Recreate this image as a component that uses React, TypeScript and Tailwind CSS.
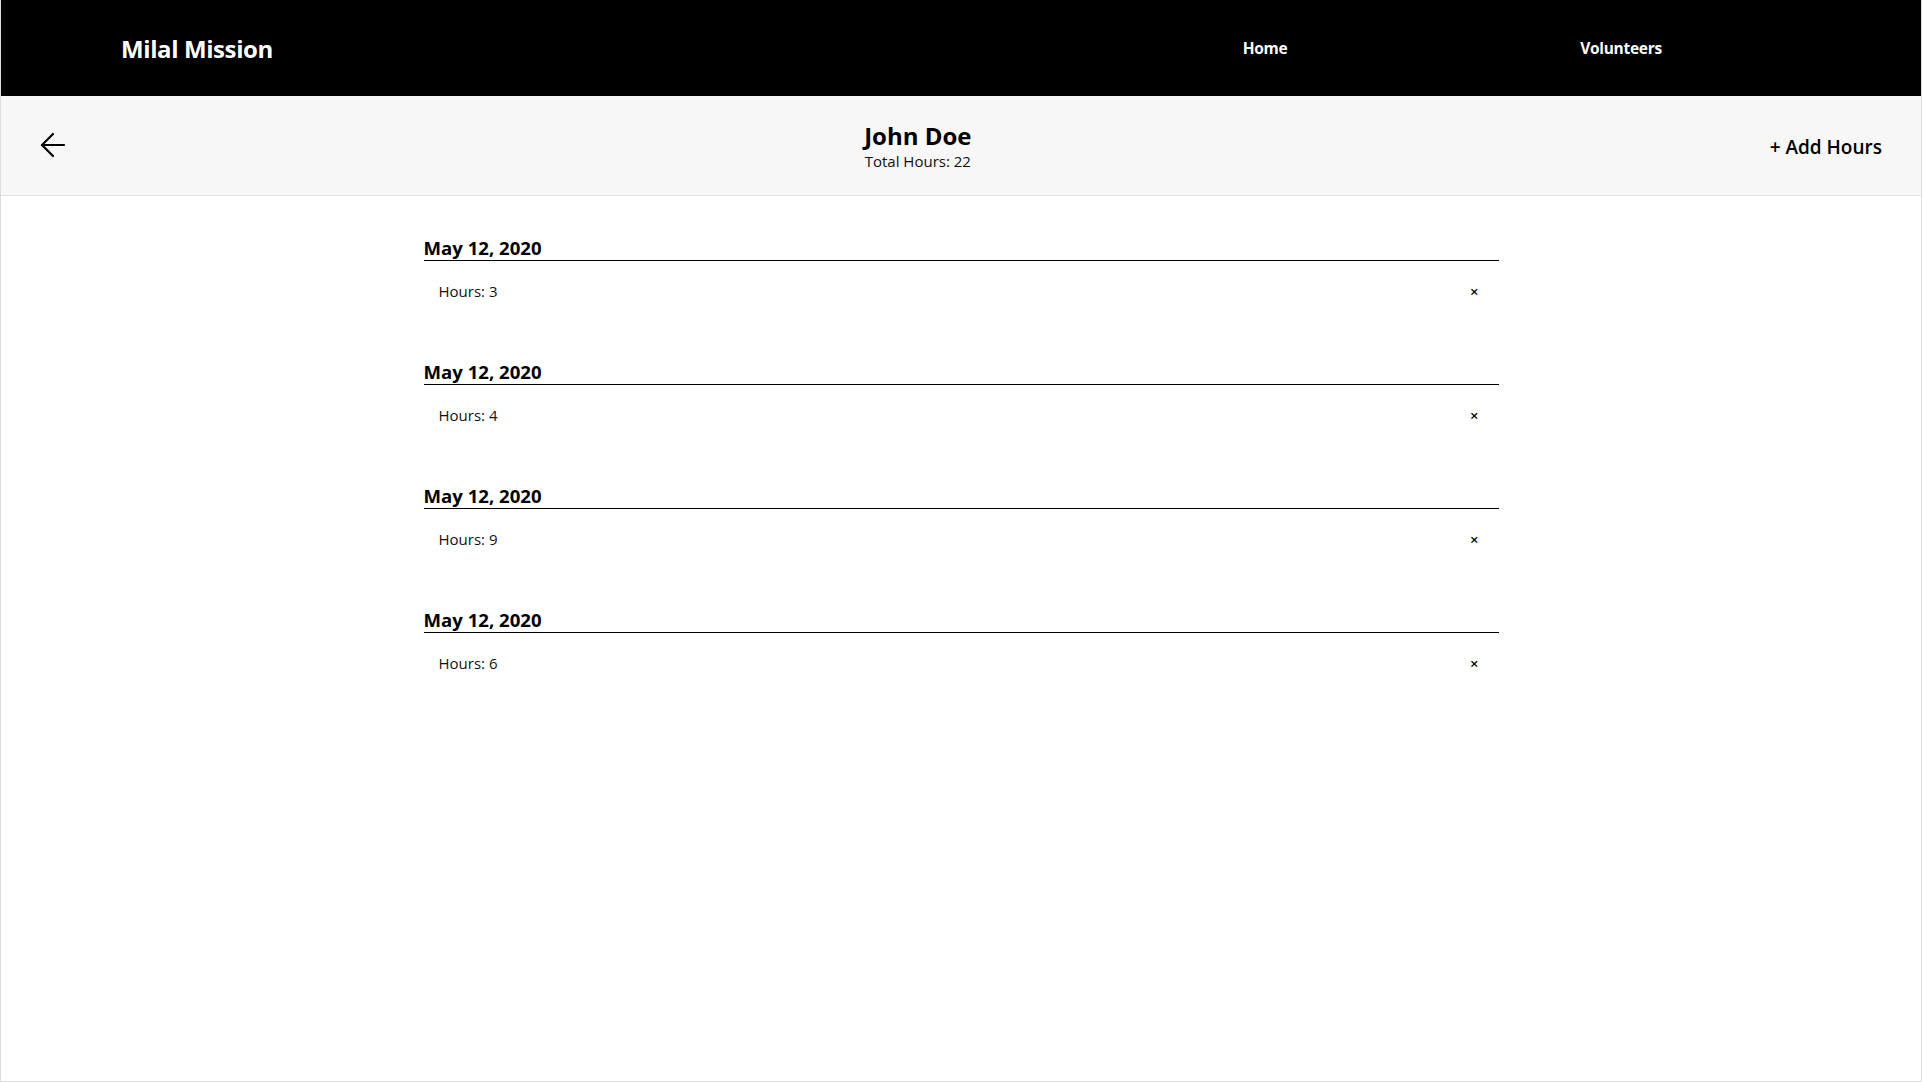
import React from 'react'

interface HourEntry {
  id: number
  date: string
  hours: number
}

const entries: HourEntry[] = [
  { id: 1, date: 'May 12, 2020', hours: 3 },
  { id: 2, date: 'May 12, 2020', hours: 4 },
  { id: 3, date: 'May 12, 2020', hours: 9 },
  { id: 4, date: 'May 12, 2020', hours: 6 },
]

function BackArrow() {
  return (
    <svg width="26" height="26" viewBox="0 0 26 26" fill="none" stroke="#000" strokeWidth="2.2" strokeLinecap="round" strokeLinejoin="round">
      <path d="M2 13h22" />
      <path d="M13 2 2 13l11 11" />
    </svg>
  )
}

export default function App() {
  const total = entries.reduce((sum, e) => sum + e.hours, 0)

  return (
    <div className="h-screen flex flex-col border-x border-b border-[#dcdcdc] bg-white text-black font-['Open_Sans',sans-serif]">
      <header className="h-[96px] shrink-0 bg-black flex items-center pt-[2px] pl-[120px] pr-[122px]">
        <div className="text-white text-[24px] font-bold tracking-[-0.4px]">Milal Mission</div>
        <nav className="ml-auto flex">
          <a className="w-[356px] text-center text-white text-[15.5px] font-bold tracking-[-0.3px]">Home</a>
          <a className="w-[356px] text-center text-white text-[15.5px] font-bold tracking-[-0.3px]">Volunteers</a>
        </nav>
      </header>

      <div className="h-[100px] shrink-0 bg-[#f7f7f7] border-b border-[#e4e4e4] flex items-center justify-between px-[39px]">
        <button className="flex items-center -mt-[2px]">
          <BackArrow />
        </button>
        <div className="flex flex-col items-center">
          <h1 className="text-[24px] font-bold leading-[30px]">John Doe</h1>
          <p className="text-[15px] leading-[20px] text-[#111]">Total Hours: {total}</p>
        </div>
        <button className="text-[19px] font-semibold mt-[4px]">+ Add Hours</button>
      </div>

      <main className="w-[1075px] mx-auto pt-[40px] flex flex-col gap-[59px]">
        {entries.map((entry) => (
          <section key={entry.id}>
            <h3 className="text-[18.6px] font-bold leading-[24px] border-b border-black">{entry.date}</h3>
            <div className="flex items-center justify-between pt-[20px] pl-[15px] pr-[20px]">
              <span className="text-[15px] leading-[20px] text-[#111]">Hours: {entry.hours}</span>
              <button className="text-[15px] font-semibold leading-[20px]">×</button>
            </div>
          </section>
        ))}
      </main>
    </div>
  )
}
